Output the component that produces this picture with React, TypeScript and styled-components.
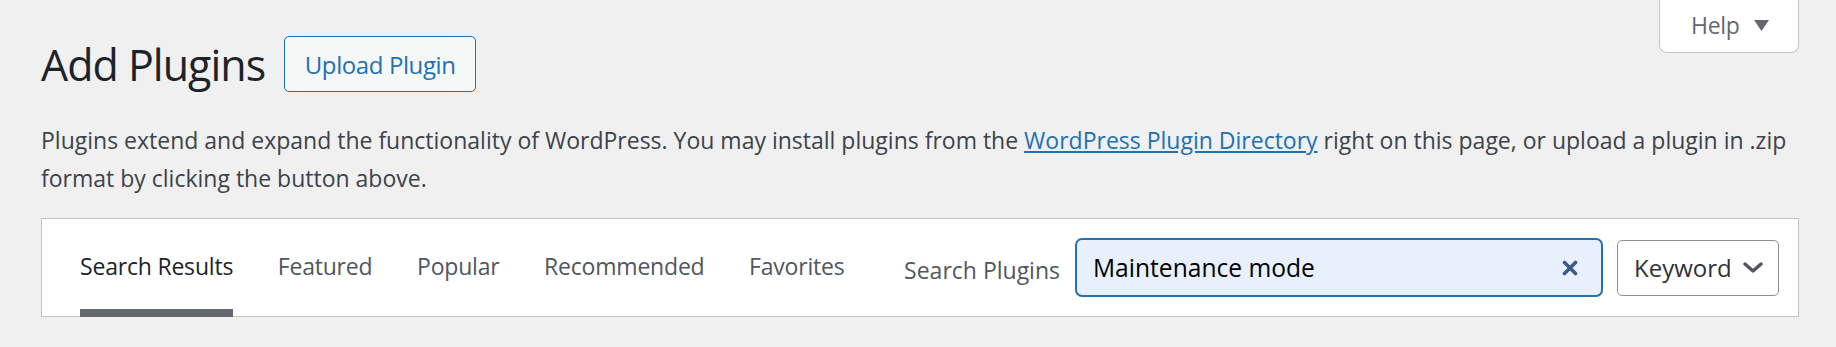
import { createGlobalStyle } from "styled-components";
import styled from "styled-components";

const GlobalStyle = createGlobalStyle`
  body {
    margin: 0;
    background: #f0f0f1;
    font-family: "Open Sans", "Noto Sans", sans-serif;
    color: #3c434a;
  }
`;

const Page = styled.div`
  padding: 0 37px 0 41px;
`;

const TopBar = styled.div`
  display: flex;
  justify-content: space-between;
  align-items: flex-start;
`;

const TitleRow = styled.div`
  display: flex;
  align-items: center;
  margin-top: 36px;
  height: 56px;
`;

const Title = styled.h1`
  margin: 0;
  font-size: 43px;
  font-weight: 400;
  letter-spacing: -1px;
  line-height: 1;
  color: #1d2327;
`;

const UploadButton = styled.button`
  margin-left: 19px;
  height: 56px;
  width: 192px;
  box-sizing: border-box;
  border: 1px solid #2271b1;
  border-radius: 5px;
  background: #f6f7f7;
  color: #2271b1;
  font-family: inherit;
  font-size: 24px;
  letter-spacing: -0.4px;
  cursor: pointer;
`;

const HelpTab = styled.button`
  display: flex;
  align-items: center;
  gap: 14px;
  width: 140px;
  height: 53px;
  box-sizing: border-box;
  padding: 0 0 2px 31px;
  background: #fff;
  border: 1px solid #c3c4c7;
  border-top: none;
  border-radius: 0 0 8px 8px;
  font-family: inherit;
  font-size: 23px;
  letter-spacing: -0.3px;
  color: #646970;
`;

const Description = styled.p`
  margin: 29px 0 0;
  font-size: 23px;
  line-height: 38px;
  color: #3c434a;
  white-space: nowrap;

  a {
    color: #2271b1;
    text-decoration: underline;
  }
`;

const FilterPanel = styled.div`
  display: flex;
  align-items: center;
  margin-top: 21px;
  height: 99px;
  box-sizing: border-box;
  padding: 0 19px 0 38px;
  background: #fff;
  border: 1px solid #c3c4c7;
`;

const TabList = styled.ul`
  display: flex;
  align-self: stretch;
  gap: 44.6px;
  margin: 0;
  padding: 0;
  list-style: none;
`;

const Tab = styled.li<{ $active?: boolean }>`
  position: relative;
  display: flex;
  align-items: center;
  padding-bottom: 4px;
  font-size: 23px;
  letter-spacing: -0.2px;
  color: ${(p) => (p.$active ? "#1d2327" : "#50575e")};

  &::after {
    content: "";
    display: ${(p) => (p.$active ? "block" : "none")};
    position: absolute;
    left: 0;
    right: 0;
    bottom: -1px;
    height: 8px;
    background: #646970;
  }
`;

const SearchForm = styled.form`
  display: flex;
  align-items: center;
  margin-left: auto;
`;

const SearchLabel = styled.label`
  margin: 5px 15px 0 0;
  font-size: 23px;
  color: #50575e;
`;

const SearchBox = styled.div`
  display: flex;
  align-items: center;
  width: 528px;
  height: 59px;
  box-sizing: border-box;
  padding: 0 23px 0 16px;
  border: 2px solid #2271b1;
  border-radius: 7px;
  background: #e8f0fe;
`;

const SearchInput = styled.input`
  flex: 1;
  min-width: 0;
  border: none;
  outline: none;
  padding: 0;
  background: transparent;
  font-family: inherit;
  font-size: 24.6px;
  color: #000;
`;

const KeywordSelect = styled.div`
  display: flex;
  align-items: center;
  gap: 11px;
  margin-left: 14px;
  width: 162px;
  height: 56px;
  box-sizing: border-box;
  padding-left: 16px;
  border: 1px solid #8c8f94;
  border-radius: 5px;
  background: #fff;
  font-size: 24px;
  color: #2c3338;
`;

export default function App() {
  return (
    <>
      <GlobalStyle />
      <Page>
        <TopBar>
          <TitleRow>
            <Title>Add Plugins</Title>
            <UploadButton>Upload Plugin</UploadButton>
          </TitleRow>
          <HelpTab>
            Help
            <svg width="15" height="11" viewBox="0 0 15 11">
              <path d="M0 0h15L7.5 11z" fill="#646970" />
            </svg>
          </HelpTab>
        </TopBar>
        <Description>
          Plugins extend and expand the functionality of WordPress. You may
          install plugins from the <a href="#">WordPress Plugin Directory</a>{" "}
          right on this page, or upload a plugin in .zip
          <br />
          format by clicking the button above.
        </Description>
        <FilterPanel>
          <TabList>
            <Tab $active>Search Results</Tab>
            <Tab>Featured</Tab>
            <Tab>Popular</Tab>
            <Tab>Recommended</Tab>
            <Tab>Favorites</Tab>
          </TabList>
          <SearchForm onSubmit={(e) => e.preventDefault()}>
            <SearchLabel htmlFor="plugin-search">Search Plugins</SearchLabel>
            <SearchBox>
              <SearchInput
                id="plugin-search"
                type="text"
                defaultValue="Maintenance mode"
              />
              <svg width="16" height="16" viewBox="0 0 16 16">
                <path
                  d="M2.5 2.5l11 11M13.5 2.5l-11 11"
                  stroke="#3a5a8c"
                  strokeWidth="3.6"
                  strokeLinecap="round"
                />
              </svg>
            </SearchBox>
            <KeywordSelect>
              Keyword
              <svg width="20" height="11" viewBox="0 0 20 11">
                <path
                  d="M2 2l8 7 8-7"
                  stroke="#50575e"
                  strokeWidth="3.4"
                  fill="none"
                  strokeLinecap="round"
                  strokeLinejoin="round"
                />
              </svg>
            </KeywordSelect>
          </SearchForm>
        </FilterPanel>
      </Page>
    </>
  );
}
